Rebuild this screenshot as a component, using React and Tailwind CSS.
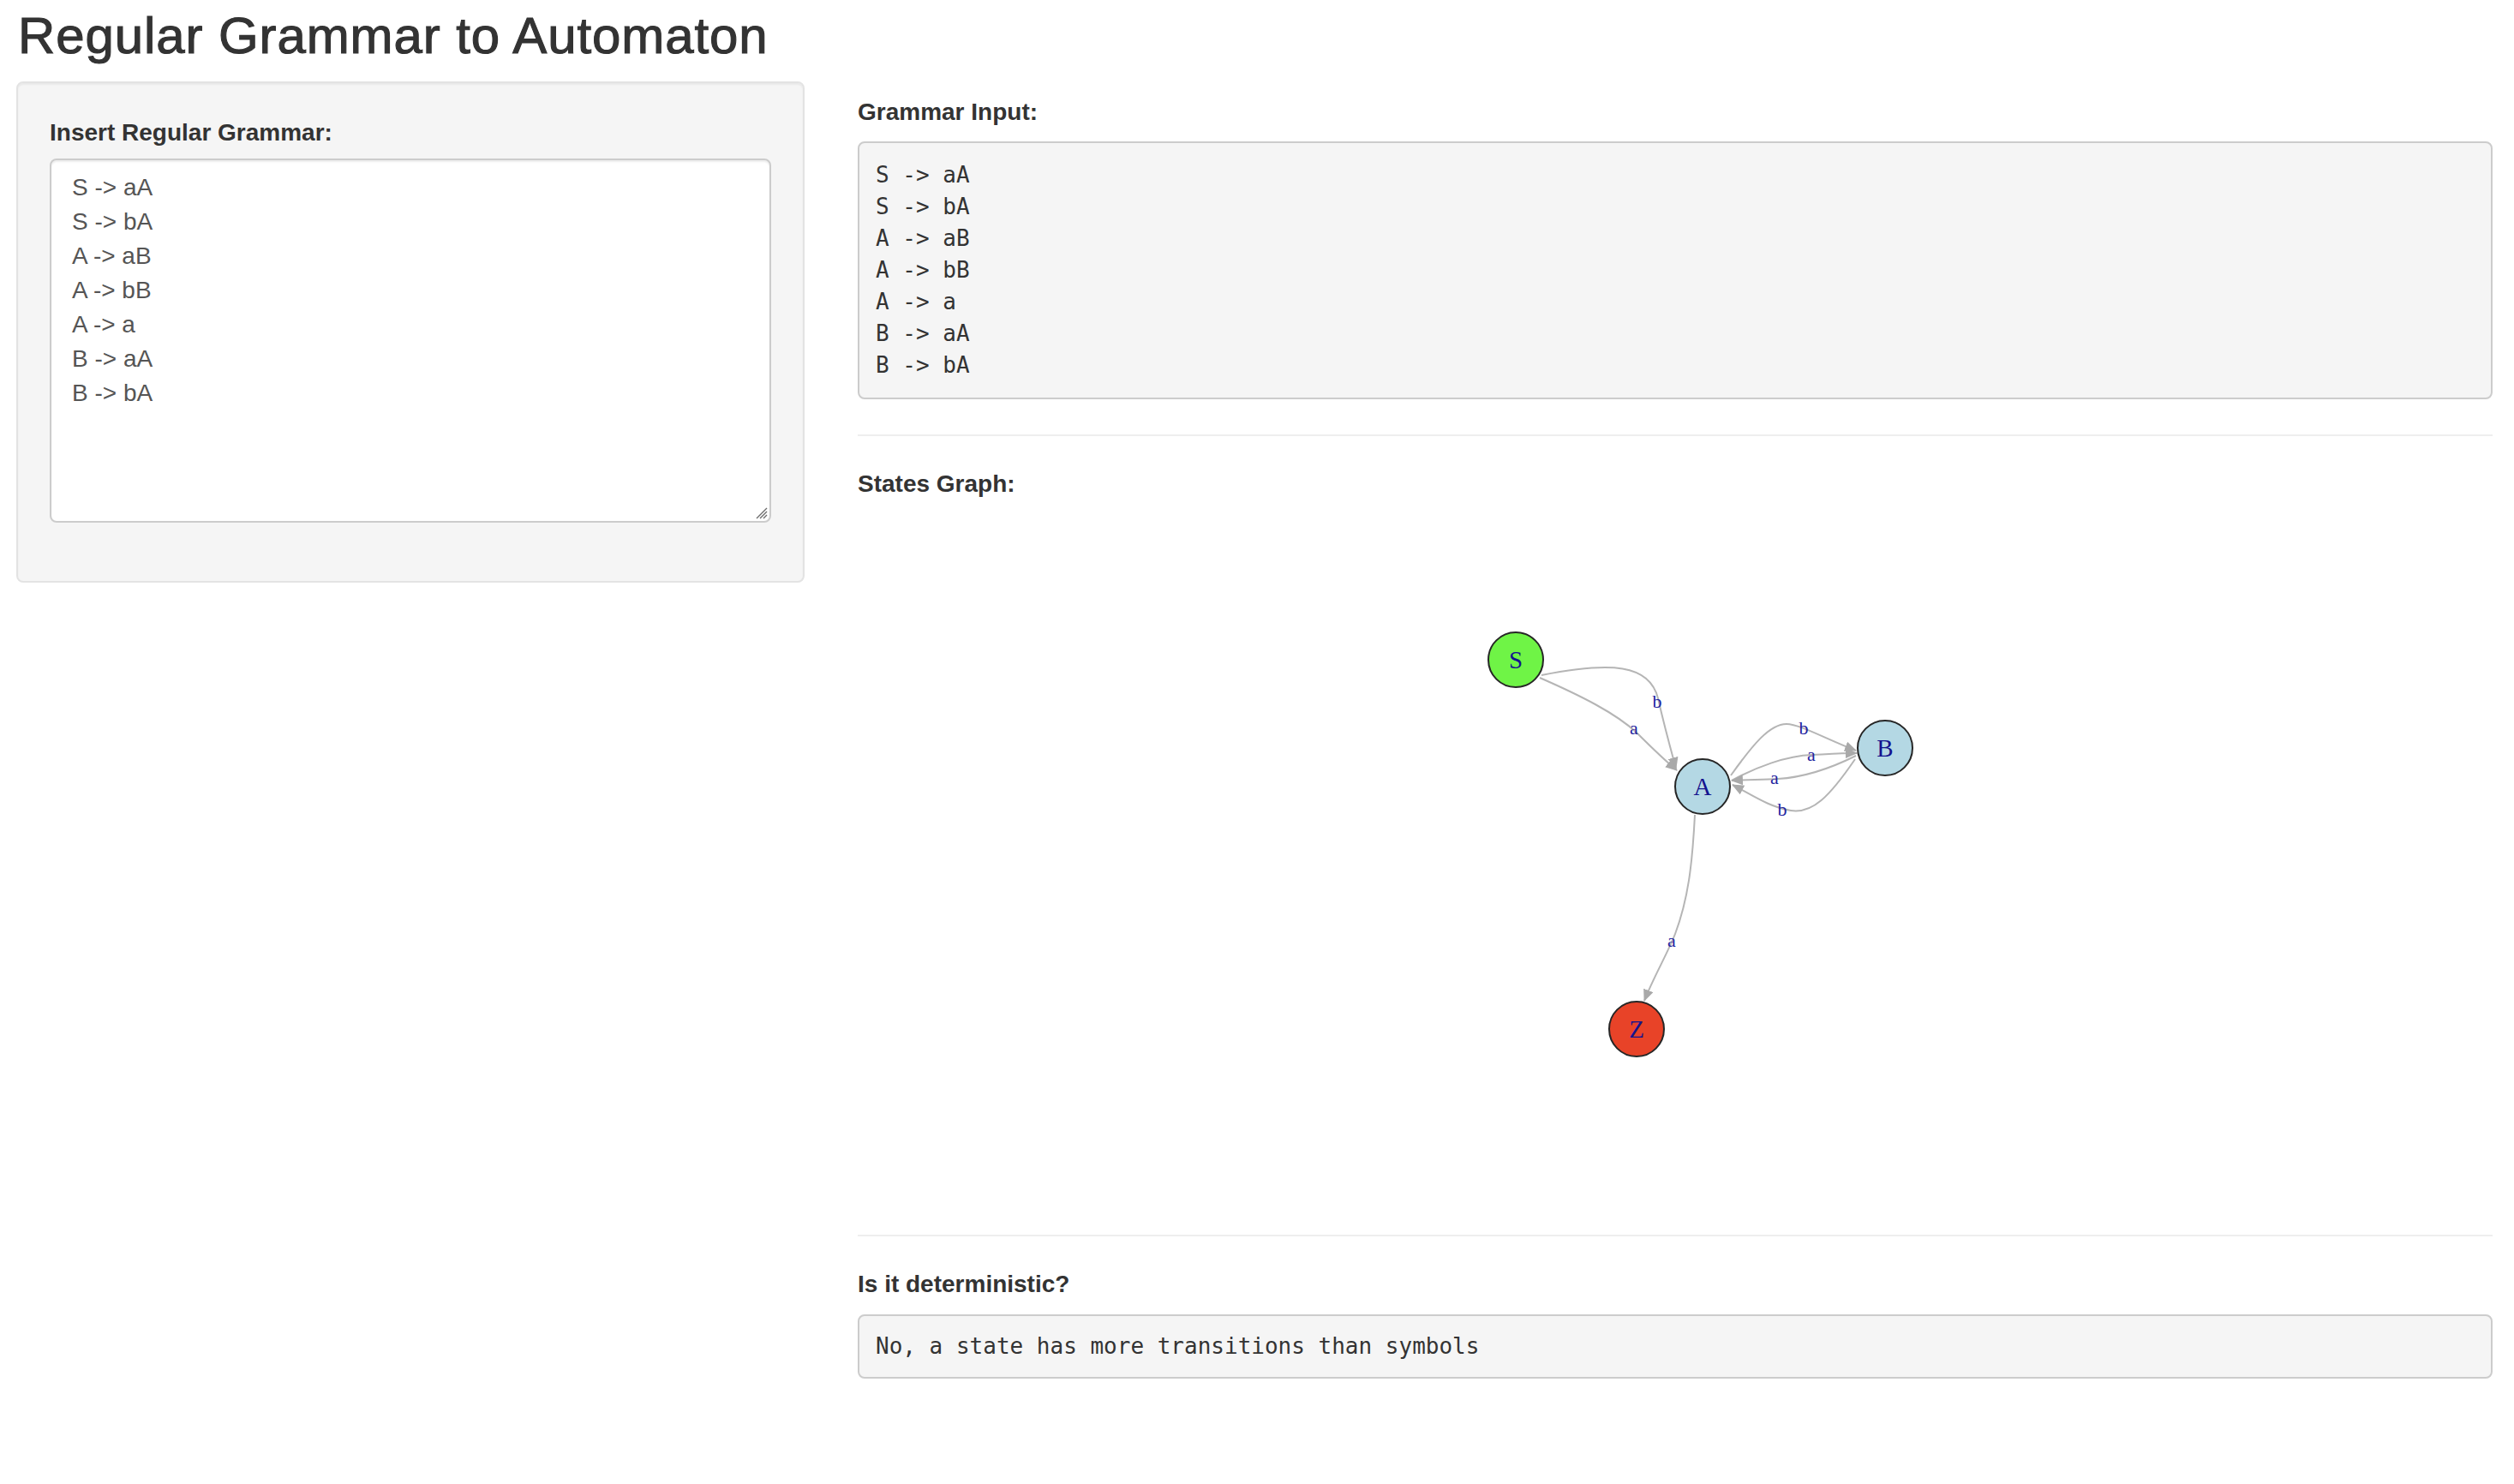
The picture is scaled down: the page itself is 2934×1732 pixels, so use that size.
const grammar = ['S -> aA', 'S -> bA', 'A -> aB', 'A -> bB', 'A -> a', 'B -> aA', 'B -> bA'];

const nodes = [
  { id: 'S', x: 1769, y: 770, fill: '#6ff446' },
  { id: 'A', x: 1987, y: 918, fill: '#b4d8e4' },
  { id: 'B', x: 2200, y: 873, fill: '#b4d8e4' },
  { id: 'Z', x: 1910, y: 1201, fill: '#e84328' },
];

const edges = [
  { d: 'M1799,788 C1880,772 1925,775 1935,815 C1943,850 1950,875 1956,897', label: 'b', lx: 1934, ly: 826 },
  { d: 'M1797,791 C1845,812 1885,832 1910,855 C1925,870 1940,885 1957,899', label: 'a', lx: 1907, ly: 857 },
  { d: 'M2020,905 C2045,870 2065,845 2085,845 C2100,845 2130,862 2166,876', label: 'b', lx: 2105, ly: 857 },
  { d: 'M2021,911 C2050,895 2085,882 2115,881 C2135,880 2150,879 2167,879', label: 'a', lx: 2114, ly: 888 },
  { d: 'M2166,882 C2140,895 2110,907 2075,909 C2060,910 2040,910 2021,911', label: 'a', lx: 2071, ly: 915 },
  { d: 'M2165,886 C2135,930 2115,950 2090,946 C2065,942 2045,928 2022,916', label: 'b', lx: 2080, ly: 952 },
  { d: 'M1978,951 C1975,1010 1970,1050 1955,1090 C1945,1115 1930,1140 1919,1168', label: 'a', lx: 1951, ly: 1105 },
];

function StatesGraph() {
  return (
    <svg width="1908" height="816" viewBox="1001 585 1908 816" className="block">
      <defs>
        <marker id="arrow" viewBox="0 0 14 12" refX="13" refY="6" markerWidth="14" markerHeight="12" markerUnits="userSpaceOnUse" orient="auto">
          <path d="M0,0 L14,6 L0,12 z" fill="#a9a9a9" />
        </marker>
      </defs>
      {edges.map((e, i) => (
        <path key={i} d={e.d} fill="none" stroke="#b5b5b5" strokeWidth="2" markerEnd="url(#arrow)" />
      ))}
      {edges.map((e, i) => (
        <text key={'l' + i} x={e.lx} y={e.ly} textAnchor="middle" fontSize="22" fill="#2424a0" fontFamily="'Liberation Serif', serif">{e.label}</text>
      ))}
      {nodes.map(n => (
        <g key={n.id}>
          <circle cx={n.x} cy={n.y} r="32" fill={n.fill} stroke="#262626" strokeWidth="2" />
          <text x={n.x} y={n.y + 10} textAnchor="middle" fontSize="29" fill="#14148f" fontFamily="'Liberation Serif', serif">{n.id}</text>
        </g>
      ))}
    </svg>
  );
}

const mono = "font-['DejaVu_Sans_Mono',monospace]";

export default function App() {
  return (
    <div className="min-h-screen bg-white pt-[9px] pl-[19px] pr-[25px] text-[#333] font-['Liberation_Sans',Arial,sans-serif]">
      <h2 className="ml-[2px] mb-[20px] text-[60px] leading-[66px] tracking-[0.9px] [-webkit-text-stroke:1.1px_#333]">Regular Grammar to Automaton</h2>

      <div className="flex gap-[62px]">
        {/* Sidebar */}
        <div className="w-[920px] shrink-0">
          <div className="bg-[#f5f5f5] border-2 border-[#e3e3e3] rounded-[8px] px-[37px] pt-[38px] pb-[38px] shadow-[inset_0_2px_2px_rgba(0,0,0,0.05)]">
            <label className="block text-[28px] leading-[40px] font-bold mb-[10px]">Insert Regular Grammar:</label>
            <div className="relative w-[842px] h-[425px] mb-[30px]">
              <textarea
                defaultValue={grammar.join('\n')}
                className="block w-full h-full resize-none bg-white border-2 border-[#ccc] rounded-[8px] px-[24px] py-[12px] text-[28px] leading-[40px] text-[#555] shadow-[inset_0_2px_2px_rgba(0,0,0,0.075)] outline-none"
              />
              {/* resize grip */}
              <svg width="16" height="16" viewBox="0 0 16 16" className="absolute right-[4px] bottom-[4px] pointer-events-none">
                <path d="M15 3 L3 15 M15 7 L7 15 M15 11 L11 15" stroke="#6e6e6e" strokeWidth="1.4" />
              </svg>
            </div>
          </div>
        </div>

        {/* Main */}
        <div className="flex-1 pt-[16px]">
          <div className="text-[28px] leading-[40px] font-bold">Grammar Input:</div>
          <pre className={`${mono} mt-[14px] bg-[#f5f5f5] border-2 border-[#ccc] rounded-[8px] px-[19px] py-[19px] text-[26px] leading-[37px] text-[#333]`}>
            {grammar.join('\n')}
          </pre>
          <hr className="mt-[41px] border-0 border-t-2 border-[#eee]" />
          <div className="mt-[36px] text-[28px] leading-[40px] font-bold">States Graph:</div>
          <StatesGraph />
          <hr className="mt-[40px] border-0 border-t-2 border-[#eee]" />
          <div className="mt-[36px] text-[28px] leading-[40px] font-bold">Is it deterministic?</div>
          <pre className={`${mono} mt-[15px] bg-[#f5f5f5] border-2 border-[#ccc] rounded-[8px] px-[19px] py-[17px] text-[26px] leading-[37px] text-[#333]`}>
            No, a state has more transitions than symbols
          </pre>
        </div>
      </div>
    </div>
  );
}
